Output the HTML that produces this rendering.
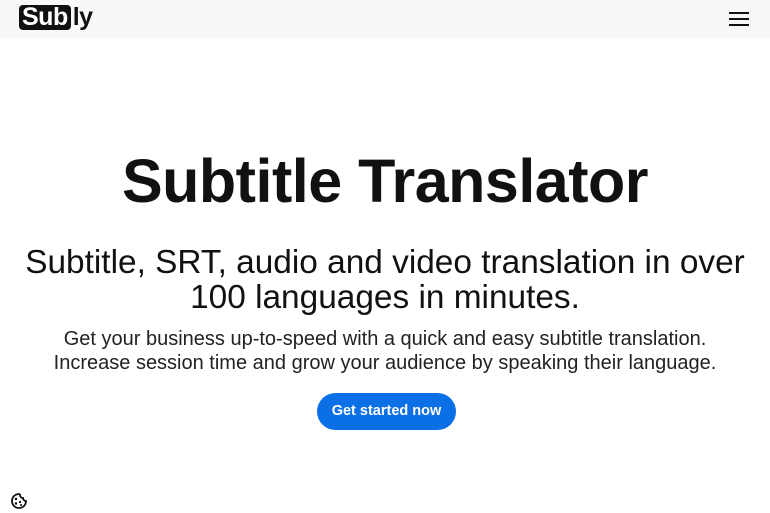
<!DOCTYPE html>
<html><head><style>
body{margin:0;width:770px;height:513px;background:#fff;font-family:"Liberation Sans",sans-serif;color:#111;position:relative;overflow:hidden}
.hdr{position:absolute;top:0;left:0;width:770px;height:38px;background:#f7f8f8}
.logo{position:absolute;left:19px;top:5px;height:25px;display:flex;align-items:center;font-weight:bold;font-size:25px;letter-spacing:-0.5px}
.logo .b{background:#111;color:#fff;border-radius:4px;padding:0 3px;height:25px;line-height:25px}
.logo .l{color:#111;margin-left:2px}
.menu{position:absolute;left:729px;top:12px;width:20px}
.menu i{display:block;height:2px;background:#111;margin-bottom:4px}
h1{position:absolute;top:146px;left:0;width:770px;text-align:center;margin:0;font-size:61px;font-weight:bold;letter-spacing:-0.5px}
.sub{position:absolute;top:245px;left:0;width:770px;text-align:center;font-size:33.4px;line-height:35px}
.body{position:absolute;top:327px;left:0;width:770px;text-align:center;font-size:20px;line-height:24px;color:#222}
.btn{position:absolute;left:317px;top:393px;width:139px;height:37px;border-radius:19px;background:#0b6fe6;color:#fff;font-size:14.5px;font-weight:bold;text-align:center;line-height:37px}
</style></head><body>
<div class="hdr"><div class="logo"><span class="b">Sub</span><span class="l">ly</span></div>
<div class="menu"><i></i><i></i><i></i></div></div>
<h1>Subtitle Translator</h1>
<div class="sub">Subtitle, SRT, audio and video translation in over<br>100 languages in minutes.</div>
<div class="body">Get your business up-to-speed with a quick and easy subtitle translation.<br>Increase session time and grow your audience by speaking their language.</div>
<div class="btn">Get started now</div>
<svg style="position:absolute;left:10px;top:492px" width="18" height="18" viewBox="0 0 18 18"><path d="M9 2a7 7 0 1 0 7 7 3 3 0 0 1-3-3 3 3 0 0 1-3-3 1 1 0 0 0-1-1z" fill="none" stroke="#111" stroke-width="1.8"/><circle cx="6" cy="7" r="1.2"/><circle cx="6" cy="11.5" r="1.2"/><circle cx="10" cy="10" r="1.1"/><circle cx="11" cy="13" r="1"/></svg>
</body></html>
